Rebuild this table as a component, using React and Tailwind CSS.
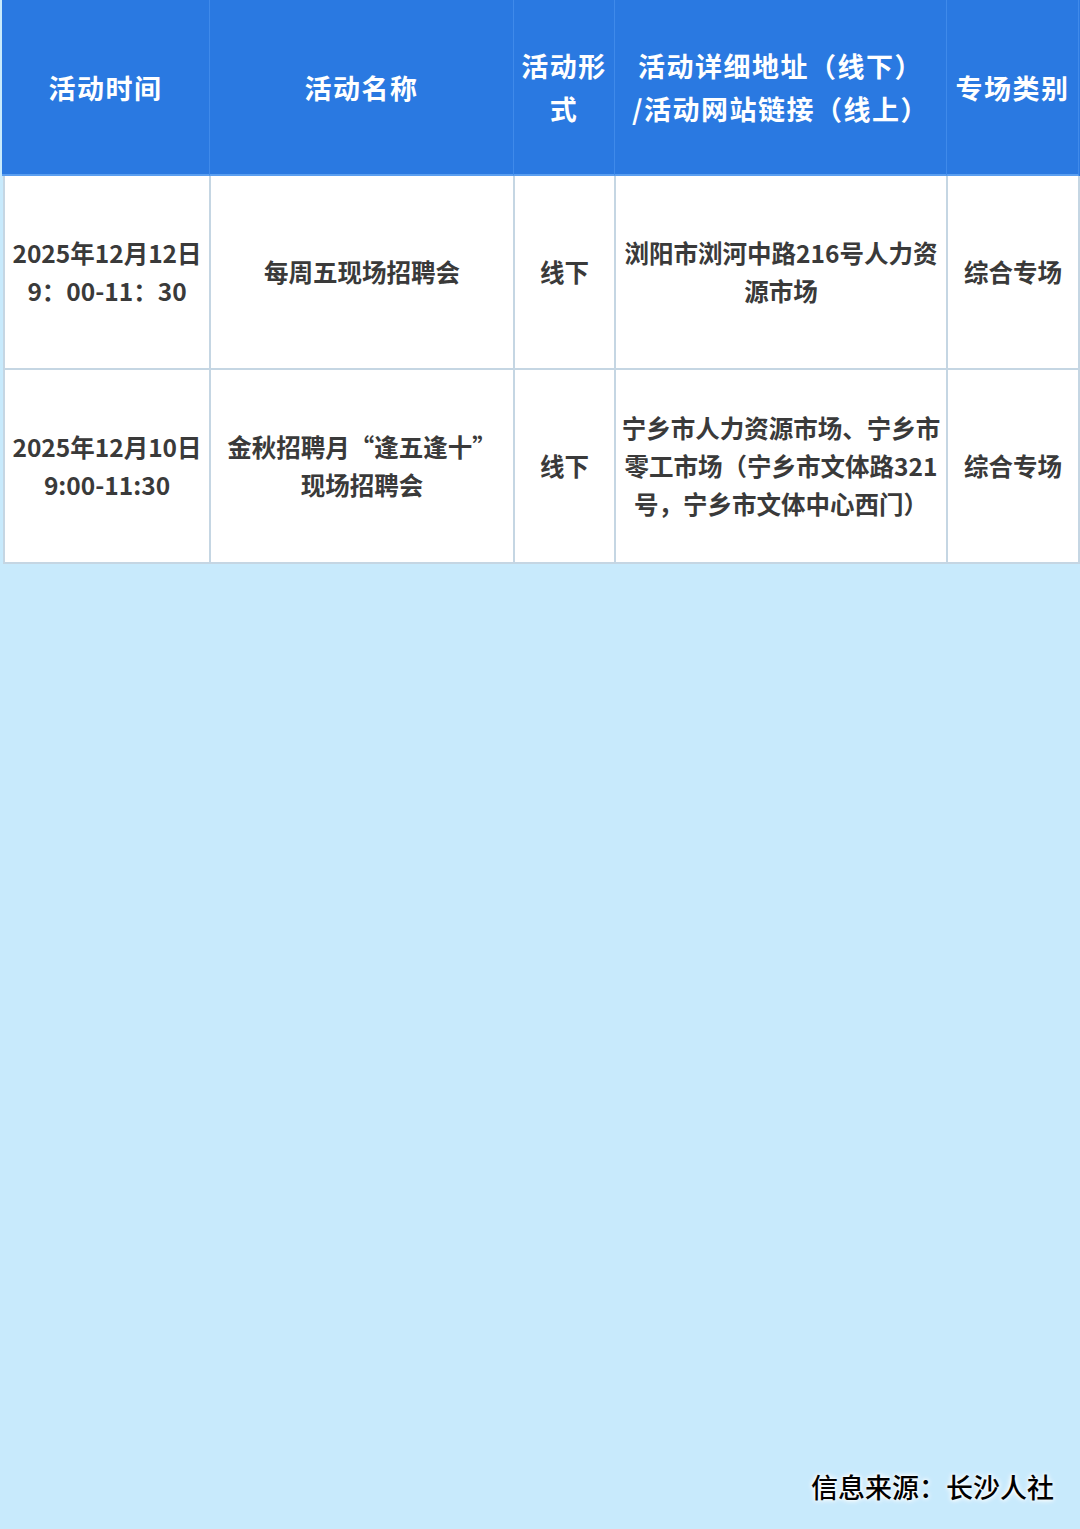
import React from "react";

const cols = "grid grid-cols-[208px_304px_101px_332px_132px]";
const font = { fontFamily: '"Noto Sans CJK SC", "Noto Sans", sans-serif' };

const headers = [
  ["活动时间"],
  ["活动名称"],
  ["活动形", "式"],
  ["活动详细地址（线下）", "/活动网站链接（线上）"],
  ["专场类别"],
];

const rows = [
  [
    ["2025年12月12日", "9：00-11：30"],
    ["每周五现场招聘会"],
    ["线下"],
    ["浏阳市浏河中路216号人力资", "源市场"],
    ["综合专场"],
  ],
  [
    ["2025年12月10日", "9:00-11:30"],
    ["金秋招聘月“逢五逢十”", "现场招聘会"],
    ["线下"],
    ["宁乡市人力资源市场、宁乡市", "零工市场（宁乡市文体路321", "号，宁乡市文体中心西门）"],
    ["综合专场"],
  ],
];

export default function App() {
  return (
    <div
      className="min-h-[1529px] w-[1080px] bg-[#c8eafc] flex flex-col overflow-hidden"
      style={font}
    >
      <div className="pl-[2px]">
        <div className={`${cols} h-[176px] bg-[#2a79e1]`}>
          {headers.map((lines, i) => (
            <div
              key={i}
              className="flex flex-col items-center justify-center border-r border-[#3f8aea] border-b-2 border-b-[#5b9ff0] text-white font-bold text-[27px] leading-[43px] text-center whitespace-nowrap tracking-[1.5px]"
            >
              {lines.map((l, j) => (
                <div key={j}>{l}</div>
              ))}
            </div>
          ))}
        </div>
      </div>
      <div className="pl-[3px]">
        {rows.map((row, r) => (
          <div key={r} className={`${cols} h-[194px] bg-white`}>
            {row.map((lines, i) => (
              <div
                key={i}
                className={`flex flex-col items-center justify-center border-b-2 border-[#c5d6e3] text-[#3a3a3a] font-semibold text-[24.5px] leading-[38px] text-center whitespace-nowrap ${
                  i === 0 ? "border-l-2" : ""
                } border-r-2`}
              >
                {lines.map((l, j) => (
                  <div key={j}>{l}</div>
                ))}
              </div>
            ))}
          </div>
        ))}
      </div>
      <div className="flex-1" />
      <div className="flex justify-end pr-[26px] pb-[22px]">
        <div className="text-[27px] leading-[40px] text-black font-medium [text-shadow:0_0_3px_#fff,0_0_5px_#fff,0_0_6px_#fff]">
          信息来源：长沙人社
        </div>
      </div>
    </div>
  );
}
